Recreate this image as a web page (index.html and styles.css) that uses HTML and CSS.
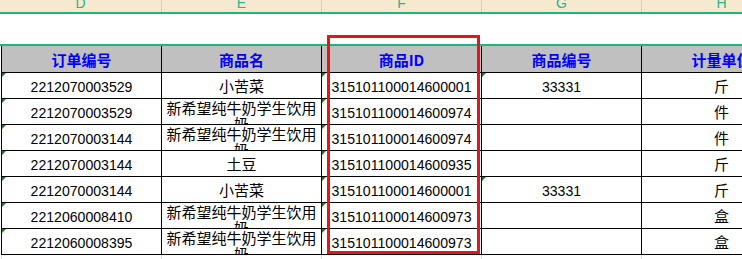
FILE: index.html
```html
<!DOCTYPE html>
<html lang="zh">
<head>
<meta charset="utf-8">
<link rel="stylesheet" href="styles.css">
</head>
<body>
<div class="sheet">
  <div class="colbar">
    <div class="col-letter">D</div>
    <div class="col-letter">E</div>
    <div class="col-letter">F</div>
    <div class="col-letter">G</div>
    <div class="col-letter">H</div>
  </div>
  <div class="green-line"></div>
  <div class="blank"></div>
  <div class="green-line"></div>

  <div class="grid">
    <div class="hcell">订单编号</div>
    <div class="hcell">商品名</div>
    <div class="hcell">商品ID</div>
    <div class="hcell">商品编号</div>
    <div class="hcell">计量单位</div>

    <div class="cell num flag">2212070003529</div>
    <div class="cell cjk">小苦菜</div>
    <div class="cell num flag">315101100014600001</div>
    <div class="cell num flag">33331</div>
    <div class="cell cjk">斤</div>

    <div class="cell num flag">2212070003529</div>
    <div class="cell cjk wrap">新希望纯牛奶学生饮用奶</div>
    <div class="cell num flag">315101100014600974</div>
    <div class="cell"></div>
    <div class="cell cjk">件</div>

    <div class="cell num flag">2212070003144</div>
    <div class="cell cjk wrap">新希望纯牛奶学生饮用奶</div>
    <div class="cell num flag">315101100014600974</div>
    <div class="cell"></div>
    <div class="cell cjk">件</div>

    <div class="cell num flag">2212070003144</div>
    <div class="cell cjk">土豆</div>
    <div class="cell num flag">315101100014600935</div>
    <div class="cell"></div>
    <div class="cell cjk">斤</div>

    <div class="cell num flag">2212070003144</div>
    <div class="cell cjk">小苦菜</div>
    <div class="cell num flag">315101100014600001</div>
    <div class="cell num flag">33331</div>
    <div class="cell cjk">斤</div>

    <div class="cell num flag">2212060008410</div>
    <div class="cell cjk wrap">新希望纯牛奶学生饮用奶</div>
    <div class="cell num flag">315101100014600973</div>
    <div class="cell"></div>
    <div class="cell cjk">盒</div>

    <div class="cell num flag">2212060008395</div>
    <div class="cell cjk wrap">新希望纯牛奶学生饮用奶</div>
    <div class="cell num flag">315101100014600973</div>
    <div class="cell"></div>
    <div class="cell cjk">盒</div>
  </div>

  <div class="below">
    <div class="bcell"></div>
    <div class="bcell"></div>
    <div class="bcell"></div>
    <div class="bcell"></div>
    <div class="bcell"></div>
  </div>

  <div class="highlight"></div>
</div>
</body>
</html>
```

FILE: styles.css
```css
html, body {
  margin: 0;
  padding: 0;
  background: #ffffff;
}

body {
  width: 742px;
  height: 259px;
  overflow: hidden;
}

.sheet {
  position: relative;
  width: 742px;
  height: 259px;
  overflow: hidden;
}

.colbar {
  display: grid;
  grid-template-columns: 161px repeat(4, 159px);
  column-gap: 1px;
  height: 12px;
  background: #dccfb4;
  width: 810px;
}

.col-letter {
  background: #f5eacf;
  color: #27b68a;
  font-family: "Liberation Sans", Arial, sans-serif;
  font-size: 14px;
  line-height: 7px;
  text-align: center;
  overflow: visible;
}

.green-line {
  height: 2px;
  background: #1fb47c;
}

.blank {
  height: 30px;
  background: #ffffff;
}

.grid {
  display: grid;
  grid-template-columns: repeat(5, 159px);
  grid-template-rows: 26px repeat(7, 25px);
  gap: 1px;
  margin-left: 1px;
  padding-left: 1px;
  padding-bottom: 1px;
  background: #000000;
  width: 800px;
}

.hcell {
  background: #c0c0c0;
  color: #0000ff;
  font-family: "Noto Sans CJK SC", sans-serif;
  font-weight: 700;
  font-size: 15px;
  display: flex;
  align-items: center;
  justify-content: center;
  white-space: nowrap;
  overflow: visible;
}

.cell {
  position: relative;
  background: #ffffff;
  color: #000000;
  display: flex;
  align-items: center;
  justify-content: center;
  text-align: center;
  overflow: hidden;
}

.num {
  font-family: "Liberation Sans", Arial, sans-serif;
  font-size: 14.1px;
  padding-top: 2px;
  box-sizing: border-box;
  white-space: nowrap;
  overflow: visible;
}

.cjk {
  font-family: "Noto Sans CJK SC", sans-serif;
  font-size: 15px;
  line-height: 16px;
}

.wrap {
  align-items: flex-start;
  padding-top: 1px;
  box-sizing: border-box;
}

.flag::before {
  content: "";
  position: absolute;
  left: 0;
  top: 0;
  width: 0;
  height: 0;
  border-top: 4px solid #1f7d1f;
  border-right: 4px solid transparent;
}

.below {
  display: grid;
  grid-template-columns: repeat(5, 159px);
  column-gap: 1px;
  margin-left: 1px;
  padding-left: 1px;
  height: 10px;
  background: #d9d9d9;
  width: 800px;
}

.bcell {
  background: #ffffff;
}

.highlight {
  position: absolute;
  left: 327px;
  top: 35px;
  width: 153px;
  height: 219px;
  box-sizing: border-box;
  border: 3px solid #e2161d;
}
```
